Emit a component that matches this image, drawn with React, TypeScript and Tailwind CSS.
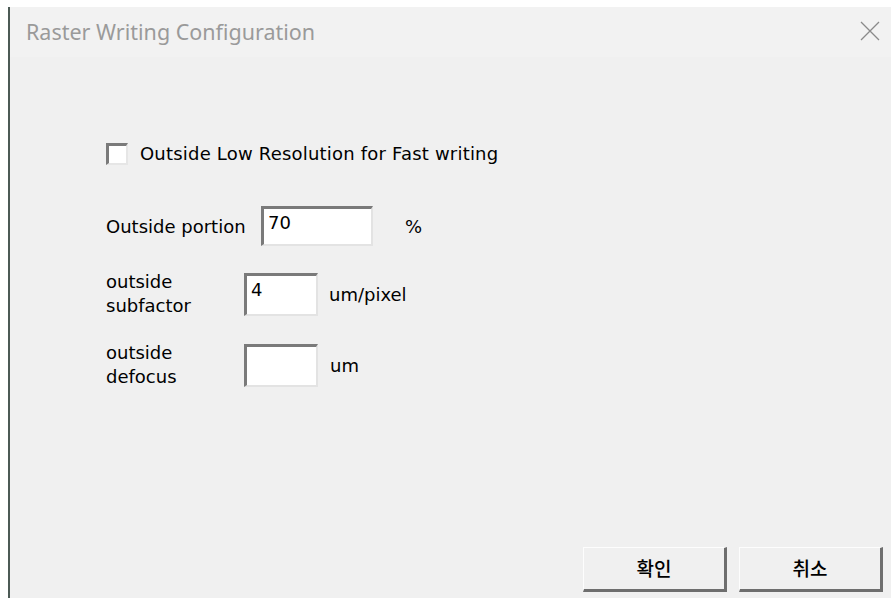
const ui = { fontFamily: '"DejaVu Sans", Tahoma, sans-serif' };
const title = { fontFamily: '"Noto Sans", "Open Sans", sans-serif' };
const kr = { fontFamily: '"Noto Sans CJK KR", sans-serif' };

// sunken edit box, classic win32 look
function Field({ value, className }: { value?: string; className: string }) {
  return (
    <div
      className={`h-full border-t-[3px] border-l-[3px] border-r-2 border-b-2 border-t-[#7a7a7a] border-l-[#7a7a7a] border-r-[#e3e3e3] border-b-[#e3e3e3] bg-white px-[4px] pt-[3px] text-[18px] leading-[22px] text-black ${className}`}
      style={ui}
    >
      {value}
    </div>
  );
}

function Button({ label }: { label: string }) {
  return (
    <button
      className="flex h-[45px] w-[144px] items-center justify-center border-t border-l border-r-[3px] border-b-[3px] border-t-[#fdfdfd] border-l-[#fdfdfd] border-r-[#6e6e6e] border-b-[#6e6e6e] bg-[#f0f0f0] text-[19px] font-medium text-black"
      style={kr}
    >
      {label}
    </button>
  );
}

export default function App() {
  return (
    <div className="flex h-[598px] w-[891px] flex-col overflow-hidden bg-white pt-[7px] pl-[8px]">
      <div className="flex flex-1 border-l-2 border-l-[#4c5a55] bg-[#f0f0f0]">
        <div className="flex flex-1 flex-col">
          {/* title bar */}
          <div className="flex h-[50px] items-center justify-between bg-[#f2f2f2] pl-[16px] pr-[10px]">
            <span className="text-[21.5px] text-[#9a9a9a]" style={title}>
              Raster Writing Configuration
            </span>
            <svg width="22" height="22" viewBox="0 0 22 22" className="mb-[2px]">
              <path d="M2 2 L20 20 M20 2 L2 20" stroke="#8a8a8a" strokeWidth="1.3" fill="none" />
            </svg>
          </div>

          <div className="flex flex-1 flex-col pl-[96px] text-[18px] text-black" style={ui}>
            <label className="mt-[83px] flex items-center">
              <span className="h-[22px] w-[22px] border-t-[3px] border-l-[3px] border-r-2 border-b-2 border-t-[#7a7a7a] border-l-[#7a7a7a] border-r-[#e6e6e6] border-b-[#e6e6e6] bg-white" />
              <span className="ml-[12px] tracking-[0.2px]">Outside Low Resolution for Fast writing</span>
            </label>

            <div className="mt-[39px] flex h-[40px] items-center">
              <span className="w-[155px]">Outside portion</span>
              <Field value="70" className="w-[112px]" />
              <span className="ml-[32px]">%</span>
            </div>

            <div className="mt-[24px] grid grid-cols-[138px_74px_auto] items-center gap-y-[23px]">
              <span className="leading-[24px]">
                outside
                <br />
                subfactor
              </span>
              <div className="h-[43px]">
                <Field value="4" className="w-[74px]" />
              </div>
              <span className="ml-[11px]">um/pixel</span>

              <span className="leading-[24px]">
                outside
                <br />
                defocus
              </span>
              <div className="h-[43px]">
                <Field className="w-[74px]" />
              </div>
              <span className="ml-[12px]">um</span>
            </div>

            <div className="mt-auto mb-[6px] flex justify-end gap-[12px] pr-[8px]">
              <Button label="확인" />
              <Button label="취소" />
            </div>
          </div>
        </div>
      </div>
    </div>
  );
}
